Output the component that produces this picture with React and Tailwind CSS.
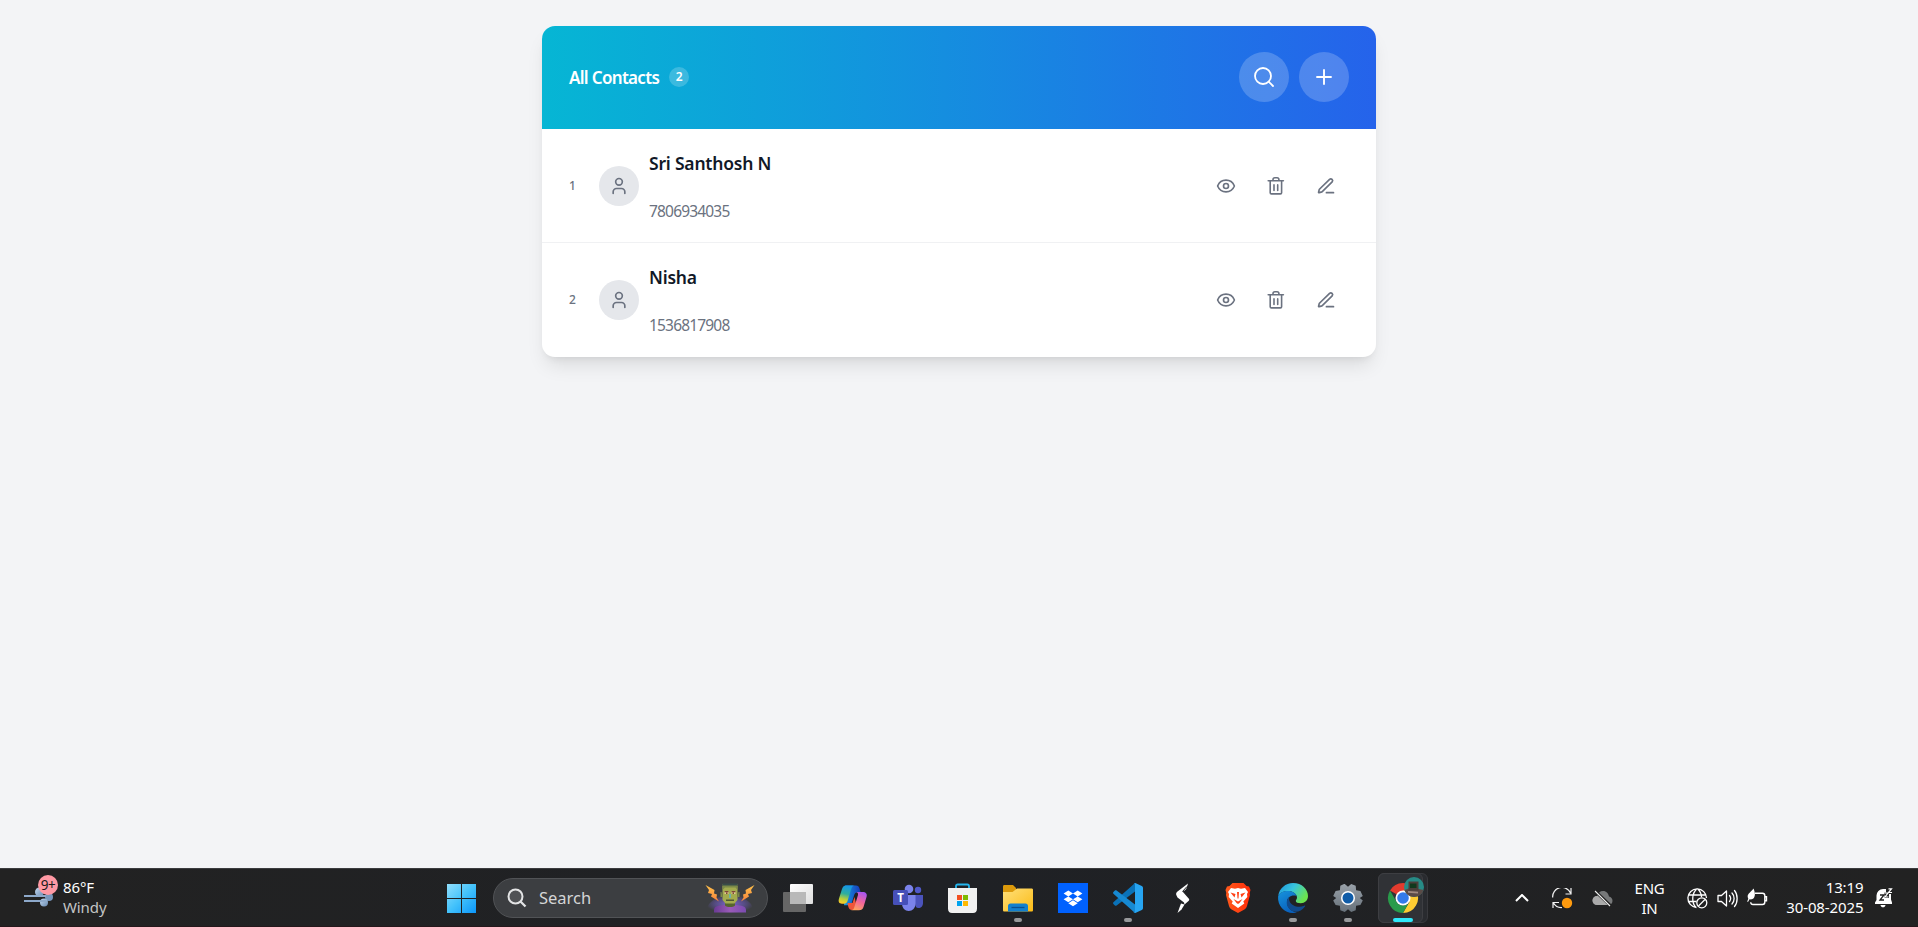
import { Eye, Plus, Search, User } from "lucide-react";

const contacts = [
  { id: 1, name: "Sri Santhosh N", phone: "7806934035" },
  { id: 2, name: "Nisha", phone: "1536817908" },
];

function TrashIcon() {
  return (
    <svg viewBox="0 0 20 20" className="size-5" fill="none" stroke="currentColor" strokeWidth="1.600" strokeLinecap="round" strokeLinejoin="round">
      <path d="M2.200 4.800h15.200M7 4.600v-1c0-1.200.7-1.900 1.900-1.900h2.100c1.200 0 1.900.7 1.900 1.900v1M4.200 5v11.700c0 .8.400 1.200 1.200 1.200h9c.8 0 1.200-.4 1.200-1.200V5M8 8.900v5.600M11.700 8.900v5.600" />
    </svg>
  );
}

function PenIcon() {
  return (
    <svg viewBox="0 0 24 24" className="size-5" fill="none" stroke="currentColor" strokeWidth="2" strokeLinecap="round" strokeLinejoin="round">
      <path d="M12.500 20H21M16.300 4a2.200 2.200 0 0 1 3.100 3.100L7.500 18.700c-.4.400-.8.600-1.300.7L3.800 20c-.5.100-.8-.2-.7-.7l.6-2.400c.1-.5.4-.9.700-1.300z" />
    </svg>
  );
}

function ContactRow({ contact }) {
  return (
    <li className="flex h-[114px] items-center border-b border-[#f0f1f3] pl-[27px] pr-[25px] last:border-b-0">
      <span className="w-[30px] text-[12px] font-medium text-[#6b7280]">{contact.id}</span>
      <span className="flex size-10 items-center justify-center rounded-full bg-[#e5e7eb] text-[#6b7280]">
        <User size={20} />
      </span>
      <div className="ml-[10px] flex flex-1 flex-col gap-[23px] pt-[3px]">
        <h2 className="text-[17.5px] font-semibold leading-[25px] tracking-[-0.2px] text-[#111827]">{contact.name}</h2>
        <p className="text-[15.5px] leading-[25px] tracking-[-0.82px] text-[#6b7280]">{contact.phone}</p>
      </div>
      <div className="flex text-[#6b7280]">
        <button className="flex size-[50px] items-center justify-center"><Eye size={20} /></button>
        <button className="flex size-[50px] items-center justify-center"><TrashIcon /></button>
        <button className="flex size-[50px] items-center justify-center"><PenIcon /></button>
      </div>
    </li>
  );
}

function ContactsCard() {
  return (
    <section className="w-[834px] overflow-hidden rounded-[13px] bg-white shadow-[0_12px_19px_-4px_rgba(0,0,0,0.1),0_5px_8px_-5px_rgba(0,0,0,0.1)]">
      <header className="flex h-[103px] items-center justify-between bg-linear-to-r/srgb from-[#06b6d4] to-[#2563eb] px-[27px] pb-px text-white">
        <div className="flex items-center gap-[10px]">
          <h1 className="pt-[2px] text-[17px] font-semibold tracking-[-0.68px]">All Contacts</h1>
          <span className="flex size-5 items-center justify-center rounded-full bg-white/20 text-[12px] font-semibold">2</span>
        </div>
        <div className="flex gap-[10px]">
          <button className="flex size-[50px] items-center justify-center rounded-full bg-white/20"><Search size={24} strokeWidth={1.8} /></button>
          <button className="flex size-[50px] items-center justify-center rounded-full bg-white/20"><Plus size={24} strokeWidth={1.9} /></button>
        </div>
      </header>
      <ul>
        {contacts.map((c) => <ContactRow key={c.id} contact={c} />)}
      </ul>
    </section>
  );
}

const iconClass = "size-[30px] overflow-visible";

function TaskViewIcon() {
  return (
    <svg viewBox="0 0 30 30" className={iconClass}>
      <defs><linearGradient id="tv" x1="0" y1="0" x2="1" y2="1"><stop stopColor="#fff" /><stop offset="1" stopColor="#dedede" /></linearGradient></defs>
      <rect x="7" y="1" width="23" height="20" rx="1" fill="url(#tv)" />
      <rect x="0" y="9" width="23" height="20" rx="1" fill="#666" />
      <rect x="7" y="9" width="16" height="12" fill="#b9b9b9" />
    </svg>
  );
}

function CopilotIcon() {
  return (
    <svg viewBox="0 0 30 30" className={iconClass}>
      <defs>
        <linearGradient id="cpA" x1="0.5" y1="0" x2="0.3" y2="1"><stop stopColor="#1596e8" /><stop offset=".45" stopColor="#2eae9e" /><stop offset=".75" stopColor="#b8cf3a" /><stop offset="1" stopColor="#ffc928" /></linearGradient>
        <linearGradient id="cpB" x1="0.7" y1="0" x2="0.3" y2="1"><stop stopColor="#a855f0" /><stop offset=".5" stopColor="#f2659b" /><stop offset="1" stopColor="#ffa45c" /></linearGradient>
        <linearGradient id="cpC" x1="0" y1="0" x2="1" y2="0"><stop stopColor="#159be5" /><stop offset="1" stopColor="#1838b8" /></linearGradient>
      </defs>
      <path d="M7 2.500h11c2 0 3 1 3.500 3l1.200 3.700h-3c-2 0-3 1-3.600 3l-3 10h-7L6 5z" fill="url(#cpC)" />
      <path d="M8.500 2.500h8.200c-2 0-2.800 1.400-3.400 3.300L9.500 18c-.6 2-1.700 2.700-3.500 2.700H4c-3 0-4-2-3-5.200L4 6c.8-2.400 2-3.500 4.500-3.500z" fill="url(#cpA)" />
      <path d="M9.500 20h5l2-6 3 13H14c-2 0-3-1-3.600-3z" fill="#ef563b" />
      <path d="M20.500 9h4c3.500 0 5 2 4 5l-3 10c-.8 2.400-2 3.200-4.600 3.200h-8.100c2 0 3-1 3.500-3L20 12c.3-1.600-.4-3-2-3z" fill="url(#cpB)" />
    </svg>
  );
}

function TeamsIcon() {
  return (
    <svg viewBox="0 0 30 30" className={iconClass}>
      <circle cx="25" cy="7" r="3.200" fill="#5059c9" />
      <path d="M22 12h8v8c0 3-2 5-4.500 5S22 23 22 20z" fill="#4b53bc" />
      <circle cx="16" cy="6" r="4.300" fill="#7b83eb" />
      <path d="M9 12h13.500v8.500c0 4.500-3 7.500-6.800 7.500S9 25 9 20.500z" fill="#7b83eb" />
      <rect x="0" y="7" width="15" height="15" rx="1.500" fill="#4650b8" />
      <text x="7.500" y="18.500" textAnchor="middle" fontSize="11.500" fontWeight="700" fill="#fff">T</text>
    </svg>
  );
}

function StoreIcon() {
  return (
    <svg viewBox="0 0 30 30" className={iconClass}>
      <path d="M8 6V3.200c0-1 .6-1.700 1.700-1.700h9.600c1.100 0 1.700.7 1.700 1.700V6" fill="none" stroke="#25b5ed" strokeWidth="1.800" />
      <path d="M0 5h29v20.500c0 3-1.500 4.500-4 4.500H4c-2.500 0-4-1.500-4-4.500z" fill="#f1f1f1" />
      <path d="M9 12h5v5H9z" fill="#f25022" /><path d="M15 12h5v5h-5z" fill="#7fba00" />
      <path d="M9 18h5v5H9z" fill="#00a4ef" /><path d="M15 18h5v5h-5z" fill="#ffb900" />
    </svg>
  );
}

function ExplorerIcon() {
  return (
    <svg viewBox="0 0 30 30" className={iconClass}>
      <defs><linearGradient id="fo" x1="0" y1="0" x2="1" y2="1"><stop stopColor="#ffe07a" /><stop offset="1" stopColor="#fbbb16" /></linearGradient></defs>
      <path d="M0 3.500c0-1 .5-1.500 1.500-1.500H10l3 3v5H0z" fill="#dc9a0b" />
      <path d="M0 9h9.500L14 5.500h14.500c1 0 1.500.5 1.500 1.500v20c0 1-.5 1.500-1.500 1.500h-27C.5 28.500 0 28 0 27z" fill="url(#fo)" />
      <path d="M5 28.500V23c0-1.500 1-2.500 2.500-2.500h15c1.500 0 2.500 1 2.500 2.500v5.500z" fill="#1380ce" />
      <path d="M8.500 24.500h13" stroke="#0a4f91" strokeWidth="1.300" />
    </svg>
  );
}

function DropboxIcon() {
  return (
    <svg viewBox="0 0 30 30" className={iconClass}>
      <path d="M0 0h30v30H0z" fill="#0061fe" />
      <path d="M10.300 7.500 15 10.400l-4.700 3-4.700-3zM19.700 7.500l4.700 2.900-4.700 3-4.700-3zM5.600 16.300l4.700-2.900 4.700 2.900-4.700 3zM19.700 13.400l4.700 2.900-4.700 3-4.700-3zM10.300 20.300l4.700-3 4.700 3-4.700 2.900z" fill="#fff" />
    </svg>
  );
}

function CodeIcon() {
  return (
    <svg viewBox="0 0 30 30" className={iconClass}>
      <path d="M22 0v8.500L3.600 22.500c-.5.400-1.200.4-1.700 0L.4 21c-.5-.5-.5-1.200 0-1.700z" fill="#0a72b8" />
      <path d="M22 30v-8.500L3.600 7.500c-.5-.4-1.200-.4-1.700 0L.4 9c-.5.500-.5 1.200 0 1.700z" fill="#1689d2" />
      <path d="m22.300 0 6.500 3c.8.400 1.200 1 1.200 1.800v20.400c0 .8-.4 1.400-1.200 1.800l-6.500 3c-1 .3-1.700 0-2.300-.6 1 .7 2 .2 2-1V1.600c0-1.200-1-1.700-2-1 .6-.6 1.300-.9 2.300-.6z" fill="#27a5f2" />
    </svg>
  );
}

function StripeSIcon() {
  return (
    <svg viewBox="0 0 30 30" className={iconClass}>
      <path d="M20 .5 9.500 8.500C8.300 9.500 7.800 10.800 8.300 12l1.200 2.500 6.500 5 .5 2 4-3.500c.8-.7.900-1.500.4-2.300L14.500 8.500c2.500-1 4-2.500 4.400-4.500z" fill="#fff" />
      <path d="m13 20.500 3.500 1-3 5L9.500 30z" fill="#fff" />
      <path d="m19 3.500-4.500 5" stroke="#202226" strokeWidth="1" />
    </svg>
  );
}

function BraveIcon() {
  return (
    <svg viewBox="0 0 30 30" className={iconClass}>
      <defs><linearGradient id="br"><stop stopColor="#ff5a1c" /><stop offset="1" stopColor="#ff2d0a" /></linearGradient></defs>
      <path d="M9.500 0h11l3 3 2.500.5L27.500 7l-.8 3 .3 2-3 11c-.5 1.700-1.200 2.500-2.600 3.500L15 30l-6.400-3.500C7.200 25.500 6.500 24.700 6 23L3 12l.3-2-.8-3L4 3.500 6.500 3z" fill="url(#br)" />
      <path d="m8 5 4 .8 3-.8 3 .8L22 5l3 4-1 2 .3 3-4 4.500 1 2L15 25l-6.300-4.500 1-2-4-4.500.3-3-1-2z" fill="#fff" />
      <path d="m7.500 9.500 5 1.500-1 3.500zM22.500 9.500l-5 1.500 1 3.500zM14 9h2l-.5 6.500h-1zM10.500 16l4.500 2.500 4.500-2.500-3 4-1.500 1-1.500-1z" fill="#ff4116" />
    </svg>
  );
}

function EdgeIcon() {
  return (
    <svg viewBox="0 0 30 30" className={iconClass}>
      <defs>
        <linearGradient id="egA" x1="0" y1="0" x2="1" y2=".5"><stop stopColor="#1b92dd" /><stop offset=".5" stopColor="#38c5dd" /><stop offset="1" stopColor="#6be34f" /></linearGradient>
        <linearGradient id="egB" x1="0" y1="0" x2=".5" y2="1"><stop stopColor="#1793dc" /><stop offset="1" stopColor="#0961bd" /></linearGradient>
      </defs>
      <path d="M.3 12.500C1.300 5.500 7.500 0 15 0c9 0 15 6.300 15 13 0 4.500-3.200 7.200-7.200 7.200-3 0-5-1-5-2.300 0-.8 1.200-1.400 1.200-3.300 0-3.600-4-6.600-9-6.600-4.500 0-8 1.800-9.700 4.500z" fill="url(#egA)" />
      <path d="M.1 13.500C1 10 5 8 10 8c4.500 0 7.700 2.200 8.600 5-5-1.500-9.600 1.500-9.600 6 0 5.500 4.300 10 10 10.200-1.200.5-2.600.8-4 .8C6.500 30-.7 22.500.1 13.500z" fill="url(#egB)" />
      <path d="M11.500 14c-4 2.500-3.500 9 .5 12.500 4.500 4 11 2.500 15-3 .5-.8 0-1.200-.8-.8-5 2.300-12.500 1-14.700-4.700-.6-1.500-.6-2.800 0-4z" fill="#114a8b" />
    </svg>
  );
}

function SettingsIcon() {
  return (
    <svg viewBox="0 0 30 30" className={iconClass}>
      <defs><linearGradient id="se" x1="0" y1="0" x2="0" y2="1"><stop stopColor="#99a1a9" /><stop offset="1" stopColor="#67717a" /></linearGradient></defs>
      <path d="m11 1 .8 0L15 3.800 18.200 1l4.500 1.800.4 4.400 4.300.7L29.800 13l-3 2 3 2.500-2.400 4.600-4.300.7-.4 4.400-4.500 1.800L15 26.200 11.800 29l-4.500-1.800-.4-4.400-4.300-.7L.2 17.500l3-2.500-3-2 2.400-5.100 4.300-.7.400-4.400z" fill="url(#se)" strokeLinejoin="round" />
      <circle cx="15" cy="15" r="7" fill="#fff" /><circle cx="15" cy="15" r="5.500" fill="#0f5ca8" />
    </svg>
  );
}

function ChromeIcon() {
  return (
    <svg viewBox="0 0 30 30" className={iconClass}>
      <path d="M15 15 2 7.500A15 15 0 0 1 28 7.500z" fill="#e33b2e" />
      <path d="M15 15V7.500h13A15 15 0 0 1 15 30l6.500-11.200z" fill="#fdcc32" />
      <path d="M2 7.500 8.500 18.800c1.300 2.200 3.700 3.700 6.500 3.700 2 0 4-.8 5.300-2L15 30A15 15 0 0 1 2 7.500z" fill="#299b4b" />
      <circle cx="15" cy="15" r="7.500" fill="#fff" /><circle cx="15" cy="15" r="5.800" fill="#347bea" />
      <circle cx="26" cy="4" r="10" fill="#278b86" />
      <path d="M16.500 7 22 5l9 1 4.500 1A10 10 0 0 1 16.500 7z" fill="#5a4b47" />
      <path d="M20.500-1.500h10v9h-10z" fill="#4a3f3a" /><path d="M22 .5h6.500V5H22z" fill="#10391d" /><path d="m20 8 10 .8v1.700l-10-.8z" fill="#a08a80" />
    </svg>
  );
}

const apps = [
  { name: "Task view", Icon: TaskViewIcon },
  { name: "Copilot", Icon: CopilotIcon },
  { name: "Teams", Icon: TeamsIcon },
  { name: "Store", Icon: StoreIcon },
  { name: "Explorer", Icon: ExplorerIcon, open: true },
  { name: "Dropbox", Icon: DropboxIcon },
  { name: "Code", Icon: CodeIcon, open: true },
  { name: "Swift", Icon: StripeSIcon },
  { name: "Brave", Icon: BraveIcon },
  { name: "Edge", Icon: EdgeIcon, open: true },
  { name: "Settings", Icon: SettingsIcon, open: true },
  { name: "Chrome", Icon: ChromeIcon, active: true },
];

function AppButton({ app }) {
  return (
    <div className="relative flex h-[58px] w-[55px] items-center justify-center">
      {app.active && (
        <>
          <span className="absolute left-[2px] top-[4px] h-[50px] w-[50px] rounded-[6px] border border-[#38393d] bg-[#292b2f]" />
          <span className="absolute left-[2px] top-[4px] h-[50px] w-[45px] rounded-[6px] border border-[#3d3e42] bg-[#303236]" />
        </>
      )}
      <span className="relative"><app.Icon /></span>
      {app.open && <span className="absolute bottom-[5px] h-1 w-2 rounded-full bg-[#98999b]" />}
      {app.active && <span className="absolute bottom-[5px] h-1 w-5 rounded-full bg-[#2ee9fb]" />}
    </div>
  );
}

function WeatherIcon() {
  return (
    <svg viewBox="0 0 36 34" className="h-[34px] w-9">
      <defs><linearGradient id="we" x1="0" y1="0" x2="1" y2="1"><stop stopColor="#c3d8ef" /><stop offset="1" stopColor="#6788af" /></linearGradient></defs>
      <circle cx="15.500" cy="17" r="4.500" fill="url(#we)" />
      <circle cx="25" cy="22" r="4" fill="#7897bd" />
      <circle cx="20" cy="27.500" r="4" fill="url(#we)" />
      <path d="M0 20h22v2H0zM0 25h22v2H0z" fill="#8da9ca" />
      <circle cx="24" cy="10" r="10" fill="#ff99a4" />
      <text x="24" y="14.800" textAnchor="middle" fontSize="13.500" letterSpacing="-0.500" fill="#1b1b1b">9+</text>
    </svg>
  );
}

function MonsterArt() {
  return (
    <svg viewBox="0 0 50 32" className="h-8 w-[50px]">
      <defs>
        <radialGradient id="gl"><stop stopColor="#8068d0" /><stop offset=".6" stopColor="#5d5096" stopOpacity=".8" /><stop offset="1" stopColor="#5d5096" stopOpacity="0" /></radialGradient>
        <linearGradient id="sh" x1="0" y1="0" x2="1" y2="0"><stop stopColor="#6a3a94" /><stop offset=".5" stopColor="#9a5bb8" /><stop offset="1" stopColor="#7a4bb0" /></linearGradient>
        <linearGradient id="bo" x1="0" y1="0" x2="0" y2="1"><stop stopColor="#ffc24a" /><stop offset="1" stopColor="#f5813c" /></linearGradient>
      </defs>
      <path d="M1 31c0-9 9-18 24-18s24 9 24 18z" fill="url(#gl)" />
      <path d="M9 30.500V28c0-4 5-4.500 10-5h12c5 .5 10 1 10 5v2.500z" fill="url(#sh)" />
      <path d="M20 17h10v6.500c-2 2-8 2-10 0z" fill="#56642f" />
      <path d="M17.500 4h15v14l-3 3.500h-9l-3-3.500z" fill="#a3ab4e" />
      <path d="M16.500 10h-1v5h2zM33.500 10h1v5h-2zM17.500 2h15v6l-2-2.500H20l-2.500 2.500z" fill="#7c8a48" />
      <path d="M17.500 1.500h15v2h-15z" fill="#394c49" />
      <path d="M19.500 9h4v3h-4zM26.500 9h4v3h-4z" fill="#e0cd92" /><path d="M19.500 9h4v1.200h-4zM26.500 9h4v1.200h-4zM21 10.500h1.500V12H21zM27.500 10.500H29V12h-1.500z" fill="#7c4636" />
      <path d="M24 12h2v4h-2z" fill="#6fb0a5" /><path d="M21 17.500h8V19h-8z" fill="#4f5733" />
      <path d="m.5 3 9 5-.5 3.500 3 1-.5 3 2.500 4-8-5 1-2.500-4-1 1-3zM49.500 3l-9 5 .5 3.500-3 1 .5 3-2.500 4 8-5-1-2.500 4-1-1-3z" fill="url(#bo)" />
    </svg>
  );
}

function SystemTray() {
  return (
    <div className="flex h-full flex-1 items-center text-white">
      <svg viewBox="0 0 14 8" className="ml-[84px] h-2 w-[14px]" fill="none" stroke="#fff" strokeWidth="2"><path d="M1 7 7 1l6 6" /></svg>
      <svg viewBox="0 0 21 21" className="ml-[23px] size-[21px]" fill="none" stroke="#f4f4f4" strokeWidth="1.200">
        <path d="M.7 9.500A9.300 9.300 0 0 1 18.500 5M19 0v6h-5.500M1 20v-5.500h6M1.500 15A9 9 0 0 0 10 19.500" />
        <circle cx="15" cy="15" r="5.200" fill="#ff9b0f" stroke="none" />
      </svg>
      <svg viewBox="0 0 21 17" className="ml-[19px] h-[17px] w-[21px]">
        <path d="M5 15a4.500 4.500 0 0 1 0-9C6 3 8 1 11 1c3.500 0 5.500 2.500 6 5.500 2 .3 3.500 2 3.500 4.300S19 15 16.500 15z" fill="#77797a" />
        <path d="M5 15a4.500 4.500 0 0 1 0-9c3 0 5 1 8 4l4 5z" fill="#aaa" />
        <path d="m3 1 16 15" stroke="#202020" strokeWidth="3" /><path d="m3 1 15 15" stroke="#eee" strokeWidth="1.100" />
      </svg>
      <div className="ml-[22px] w-[30px] text-center text-[15px] leading-5 tracking-[-0.300px]"><p>ENG</p><p>IN</p></div>
      <div className="ml-[22px] flex gap-[9px]">
        <svg viewBox="0 0 21 21" className="size-[21px]" fill="none" stroke="#fff" strokeWidth="1.300">
          <path d="M19.500 10A9.300 9.300 0 1 0 9.500 19.500M10 .8C4.500 5.500 4.500 15 9 19.500M10.500.8C13.500 3.500 14.500 6.500 14.500 9M1.500 7h17.500M1.500 13.500h8" />
          <circle cx="14.800" cy="14.800" r="5" /><path d="m11.500 18 6.500-6.500" />
        </svg>
        <svg viewBox="0 0 21 21" className="size-[21px]" fill="none" stroke="#fff" strokeWidth="1.300" strokeLinejoin="round" strokeLinecap="round">
          <path d="M1 7.500h3.500L9.500 3v15l-5-4.500H1zM12.500 7.500c1.300 1.700 1.300 4.300 0 6M15 5c2.800 3 2.800 8 0 11M17.500 2.500c3.500 4 3.500 12 0 16" />
        </svg>
        <svg viewBox="0 0 21 21" className="size-[21px]" fill="none" stroke="#fff" strokeWidth="1.400">
          <path d="M8 5.200h7.500c1.500 0 2.300.9 2.300 2.300V14c0 1.500-.8 2.500-2.300 2.500H6c-1.400 0-2.200-.8-2.300-2.200M18 8.800h1.500v4H18" />
          <path d="M6.500.5c1.500 3.500 2 7 .5 9.200-1 1.500-2.700 2-4.500 1.600L1 14l-.8-.4 1.100-2.800C-1 6 3.500 4.800 6.500.5z" fill="#fff" stroke="none" />
        </svg>
      </div>
      <div className="-mt-[2px] ml-[12px] w-[84px] text-right text-[15px] leading-5 tracking-[-0.100px]"><p>13:19</p><p>30-08-2025</p></div>
      <svg viewBox="0 0 18 20" className="ml-[11px] h-5 w-[18px]">
        <path d="M0 16v-1.500L1.500 12V7.500A6.500 6.500 0 0 1 8 1h3v5h5v5.500l1 3V16z" fill="#fff" /><path d="M5.500 17h5c-.3 1.500-1.200 2.300-2.500 2.300S5.800 18.500 5.500 17z" fill="#fff" />
        <path d="M5 7h4L5 12h4" fill="none" stroke="#202020" strokeWidth="1.300" />
        <path d="M9.500 4.500h4.500v5.500H9.500z" fill="#202020" /><path d="M10 5h3L10 9h3.500M13.500.8h3L13.500 4.500H17" fill="none" stroke="#fff" strokeWidth="1.200" />
      </svg>
    </div>
  );
}

function Taskbar() {
  return (
    <footer className="flex h-[59px] items-center border-b border-t border-b-[#25171b] border-t-[#3b3c3e] bg-linear-to-r from-[#222222] via-[#1f2125] to-[#222222] pt-px font-['Noto_Sans','Open_Sans',sans-serif]">
      <div className="flex h-full w-[434px] items-center pl-6">
        <div className="-mt-3"><WeatherIcon /></div>
        <div className="-mt-[2px] ml-[3px] text-[15px] leading-5 tracking-[-0.100px]">
          <p className="text-white">86°F</p><p className="text-[#c4c5c6]">Windy</p>
        </div>
      </div>
      <div className="flex w-[55px] justify-center">
        <svg viewBox="0 0 29 29" className="size-[29px]">
          <defs><linearGradient id="win" gradientUnits="userSpaceOnUse" x1="0" y1="0" x2="29" y2="29"><stop stopColor="#91defc" /><stop offset=".5" stopColor="#43c2fb" /><stop offset="1" stopColor="#0b96fa" /></linearGradient></defs>
          <path d="M0 0h14v14H0zM15 0h14v14H15zM0 15h14v14H0zM15 15h14v14H15z" fill="url(#win)" />
        </svg>
      </div>
      <div className="ml-1 flex h-10 w-[275px] items-center rounded-full border border-[#515356] bg-[#3c3e41] pl-[13px] pr-3">
        <svg viewBox="0 0 20 20" className="size-5" fill="none" stroke="#e3e4e5" strokeWidth="2"><circle cx="8.500" cy="8.500" r="7" fill="#505255" /><path d="m13.500 13.500 5 5" strokeWidth="2.300" /></svg>
        <span className="ml-[12px] flex-1 pt-px text-[16.500px] text-[#d4d5d6]">Search</span>
        <MonsterArt />
      </div>
      <div className="ml-[2.5px] flex">
        {apps.map((app) => <AppButton key={app.name} app={app} />)}
      </div>
      <SystemTray />
    </footer>
  );
}

export default function App() {
  return (
    <div className="flex h-[927px] w-[1918px] flex-col overflow-hidden bg-[#f3f4f6] font-['Noto_Sans','Open_Sans',sans-serif]">
      <main className="flex flex-1 items-start justify-center pt-[26px]"><ContactsCard /></main>
      <Taskbar />
    </div>
  );
}
